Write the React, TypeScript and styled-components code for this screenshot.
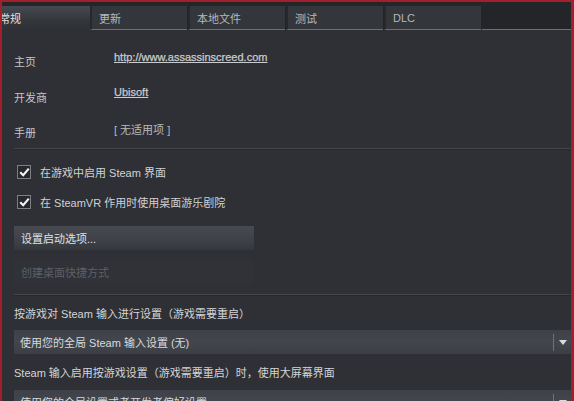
import React from 'react';
import styled, { createGlobalStyle } from 'styled-components';

const GlobalStyle = createGlobalStyle`
  html, body {
    margin: 0;
    padding: 0;
    background: #2e3035;
  }
  body {
    font-family: "Liberation Sans", "Noto Sans CJK SC", sans-serif;
    font-size: 11px;
    color: #c4c6c9;
  }
`;

const Window = styled.div`
  width: 574px;
  height: 401px;
  box-sizing: border-box;
  border-top: 2px solid #a3202b;
  border-left: 2px solid #a3202b;
  border-right: 3px solid #a3202b;
  background: #2e3035;
  overflow: hidden;
  display: flex;
  flex-direction: column;
`;

const TabStrip = styled.div`
  display: flex;
  align-items: flex-end;
  height: 28px;
  background: #232529;
  flex-shrink: 0;
`;

const Tab = styled.div<{ $active?: boolean }>`
  box-sizing: border-box;
  width: ${(p) => (p.$active ? '88px' : '97px')};
  height: 24px;
  margin-right: ${(p) => (p.$active ? '0' : '1px')};
  display: flex;
  align-items: center;
  padding-left: ${(p) => (p.$active ? '0' : '7px')};
  overflow: hidden;
  white-space: nowrap;
  color: ${(p) => (p.$active ? '#e2e3e5' : '#b6b8bb')};
  background: ${(p) =>
    p.$active
      ? 'linear-gradient(#46494f, #33363b 60%, #2e3035)'
      : '#33363b'};
  border-bottom: ${(p) => (p.$active ? 'none' : '1px solid #6d7075')};
  border-left: ${(p) => (p.$active ? 'none' : '2px solid #26282c')};

  span {
    margin-left: ${(p) => (p.$active ? '-3px' : '0')};
  }
`;

const TabFill = styled.div`
  flex: 1;
  height: 1px;
  background: #6d7075;
`;

const Body = styled.div`
  flex: 1;
  padding: 0 0 0 12px;
  display: flex;
  flex-direction: column;
`;

const InfoRow = styled.div`
  display: grid;
  grid-template-columns: 100px 1fr;
  height: 35px;
  align-items: start;
  &:first-child {
    margin-top: 21px;
  }
`;

const InfoLabel = styled.div<{ $drop: number }>`
  padding-top: ${(p) => p.$drop}px;
  color: #c4c6c9;
`;

const InfoLink = styled.a`
  color: #c9cbce;
  text-decoration: underline;
  font-size: 11px;
  -webkit-text-stroke: 0.25px #c9cbce;
`;

const InfoPlain = styled.div`
  color: #b8babd;
`;

const Divider = styled.div<{ $top: number }>`
  margin-top: ${(p) => p.$top}px;
  height: 1px;
  background: #43464b;
  border-bottom: 1px solid #26282b;
`;

const CheckRow = styled.label`
  display: flex;
  align-items: center;
  gap: 9px;
  height: 14px;
  padding-left: 3px;
  margin-top: 15px;
  color: #d0d2d5;
  & + & {
    margin-top: 16px;
  }
`;

const Box = styled.span`
  width: 14px;
  height: 14px;
  box-sizing: border-box;
  border: 1px solid #7b7e83;
  background: #26282c;
  display: flex;
  align-items: center;
  justify-content: center;
`;

const ActionButton = styled.div<{ $disabled?: boolean }>`
  width: 240px;
  height: 24px;
  box-sizing: border-box;
  padding-left: 7px;
  display: flex;
  align-items: center;
  color: ${(p) => (p.$disabled ? '#5d6066' : '#e1e2e4')};
  background: ${(p) =>
    p.$disabled ? '#303237' : 'linear-gradient(#474a51, #3c3f45 70%, #34373c)'};
  margin-top: ${(p) => (p.$disabled ? '10px' : '17px')};
`;

const SectionLabel = styled.div<{ $top: number }>`
  margin-top: ${(p) => p.$top}px;
  color: #d3d5d8;
  line-height: 14px;
`;

const Select = styled.div<{ $top: number }>`
  margin-top: ${(p) => p.$top}px;
  height: 24px;
  display: flex;
  align-items: center;
  background: linear-gradient(#3e4148, #43464d 50%, #3b3e44);
  color: #d7d9dc;
`;

const SelectText = styled.div`
  flex: 1;
  padding-left: 6px;
  white-space: nowrap;
  overflow: hidden;
`;

const SelectArrow = styled.div`
  width: 17px;
  height: 17px;
  border-left: 1px solid #6f7278;
  display: flex;
  align-items: center;
  justify-content: center;
`;

const tabs = ['常规', '更新', '本地文件', '测试', 'DLC'];

function Check() {
  return (
    <Box>
      <svg width="11" height="10" viewBox="0 0 11 10">
        <path d="M1.2 5.2 L4.2 8.2 L9.8 1.6" stroke="#f2f2f2" strokeWidth="2.2" fill="none" />
      </svg>
    </Box>
  );
}

function Arrow() {
  return (
    <SelectArrow>
      <svg width="8" height="5" viewBox="0 0 8 5">
        <path d="M0 0 H8 L4 5 Z" fill="#d8dadc" />
      </svg>
    </SelectArrow>
  );
}

export default function App() {
  return (
    <>
      <GlobalStyle />
      <Window>
        <TabStrip>
          {tabs.map((t, i) => (
            <Tab key={t} $active={i === 0}>
              <span>{t}</span>
            </Tab>
          ))}
          <TabFill />
        </TabStrip>
        <Body>
          <div>
            <InfoRow>
              <InfoLabel $drop={2}>主页</InfoLabel>
              <InfoLink>http://www.assassinscreed.com</InfoLink>
            </InfoRow>
            <InfoRow>
              <InfoLabel $drop={3}>开发商</InfoLabel>
              <InfoLink>Ubisoft</InfoLink>
            </InfoRow>
            <InfoRow>
              <InfoLabel $drop={3}>手册</InfoLabel>
              <InfoPlain>[ 无适用项 ]</InfoPlain>
            </InfoRow>
          </div>
          <Divider $top={-8} />
          <CheckRow>
            <Check />
            在游戏中启用 Steam 界面
          </CheckRow>
          <CheckRow>
            <Check />
            在 SteamVR 作用时使用桌面游乐剧院
          </CheckRow>
          <ActionButton>设置启动选项...</ActionButton>
          <ActionButton $disabled>创建桌面快捷方式</ActionButton>
          <Divider $top={10} />
          <SectionLabel $top={11}>按游戏对 Steam 输入进行设置（游戏需要重启）</SectionLabel>
          <Select $top={9}>
            <SelectText>使用您的全局 Steam 输入设置 (无)</SelectText>
            <Arrow />
          </Select>
          <SectionLabel $top={12}>Steam 输入启用按游戏设置（游戏需要重启）时，使用大屏幕界面</SectionLabel>
          <Select $top={10}>
            <SelectText>使用您的全局设置或者开发者偏好设置</SelectText>
            <Arrow />
          </Select>
        </Body>
      </Window>
    </>
  );
}
